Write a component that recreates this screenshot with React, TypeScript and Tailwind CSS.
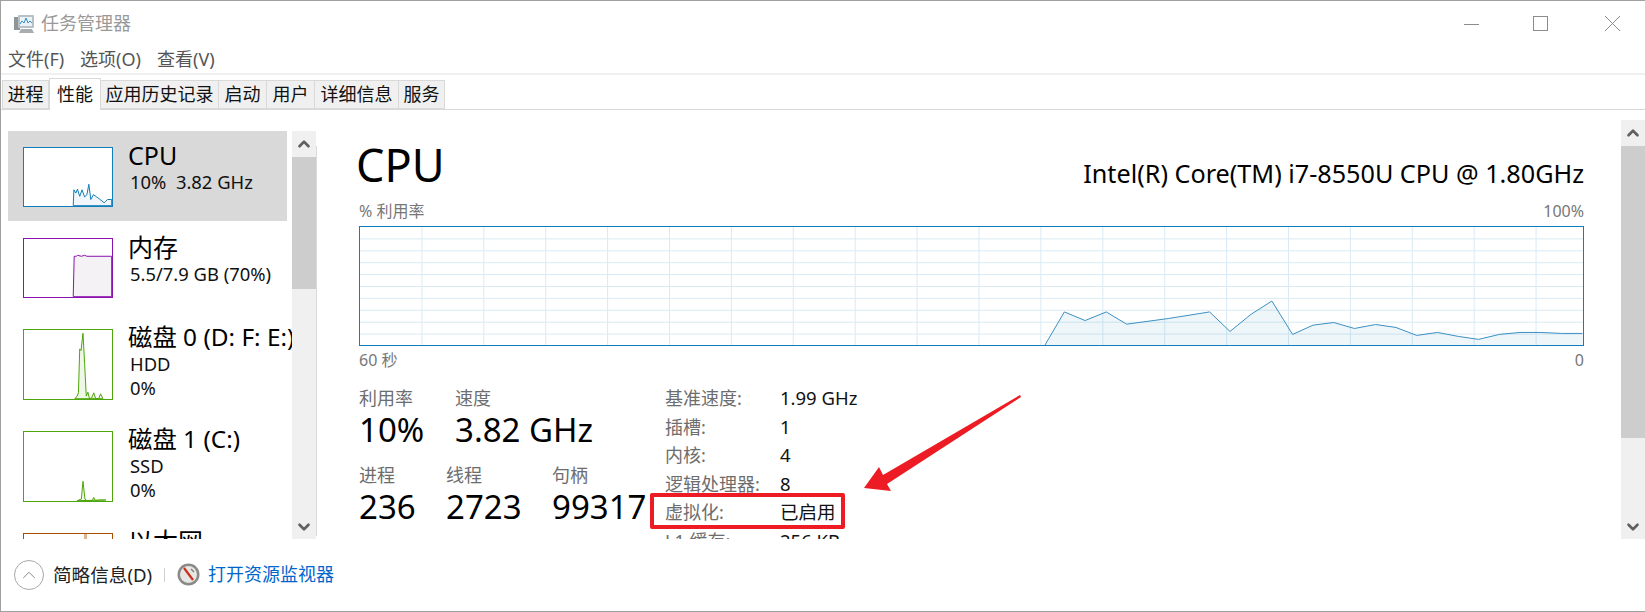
import React from 'react';
import { ChevronUp, ChevronDown } from 'lucide-react';

// points are read off zoomed crops of the chart: x is crop px / 2.55, y is crop px / 3
const cpuRaw = [
  [38, 226], [88, 125], [141, 151], [195, 125], [247, 162], [353, 145], [459, 125], [511, 184], [565, 132],
  [618, 92], [671, 193], [723, 165], [776, 157], [829, 175], [883, 163], [935, 172], [988, 196], [1041, 187],
  [1094, 199], [1146, 208], [1199, 193], [1252, 187], [1305, 187], [1358, 190], [1411, 190],
];
const cpuPoints = cpuRaw.map(([x, y]) => `${1030 + x / 2.55 - 359},${270 + y / 3 - 226}`).join(' ');

const vLines = Array.from({ length: 19 }, (_, i) => 62 * (i + 1));
const hLines = Array.from({ length: 9 }, (_, i) => 12 * (i + 1));

const Thumb = ({ h, color, fill, box, points }: { h: string; color: string; fill: string; box: string; points: string }) => (
  <div className={`w-[90px] shrink-0 border-[1.5px] bg-white ${h}`} style={{ borderColor: color }}>
    <svg viewBox={box} preserveAspectRatio="none" className="w-full h-full block">
      <polygon points={points} fill={fill} stroke={color} strokeWidth="1" vectorEffect="non-scaling-stroke" />
    </svg>
  </div>
);

const Tab = ({ label, w, active }: { label: string; w: string; active?: boolean }) => (
  <div
    className={`${w} flex items-center justify-center text-[18px] text-[#111] border border-[#d9d9d9] whitespace-nowrap ${
      active ? 'h-[32px] bg-white border-b-0 relative z-10 -mb-px' : 'h-[29px] bg-[#f0f0f0] -ml-px'
    }`}
  >
    {label}
  </div>
);

const SpecRow = ({ label, value }: { label: string; value: string }) => (
  <div className="flex leading-[28.6px] text-[18px]">
    <span className="w-[115px] text-[#6d6d6d]">{label}</span>
    <span className="text-[#111] text-[18.5px]">{value}</span>
  </div>
);

const Stat = ({ label, value, w }: { label: string; value: string; w: string }) => (
  <div className={w}>
    <div className="text-[18px] leading-[24px] text-[#6d6d6d]">{label}</div>
    <div className="text-[33px] leading-[40px] text-black whitespace-nowrap">{value}</div>
  </div>
);

const Scrollbar = ({ thumb }: { thumb: string }) => (
  <div className="w-[24px] h-full flex flex-col bg-[#f0f0f0] shrink-0">
    <div className="h-[26px] flex items-center justify-center">
      <ChevronUp size={18} strokeWidth={3.5} className="text-[#606060]" />
    </div>
    <div className={`${thumb} bg-[#cdcdcd]`} />
    <div className="flex-1 flex items-end justify-center pb-[3px]">
      <ChevronDown size={18} strokeWidth={3.5} className="text-[#606060]" />
    </div>
  </div>
);

export default function App() {
  return (
    <div
      className="relative w-[1645px] h-[612px] overflow-hidden bg-white border-t border-b border-l border-[#a0a0a0]"
      style={{ fontFamily: '"Noto Sans", "Noto Sans CJK SC", sans-serif' }}
    >
      {/* title bar */}
      <div className="h-[45px] flex items-center pl-[13px] pr-[25px]">
        <svg width="21" height="20" viewBox="0 0 21 20" className="shrink-0">
          <rect x="0" y="3" width="6" height="13" fill="#8f9699" />
          <rect x="4" y="1" width="16" height="13" rx="1" fill="#b9c0c4" />
          <rect x="6" y="3" width="12" height="9" fill="#e8f2f8" />
          <path d="M6 10 L8 7 L10 9 L12 4 L14 9 L16 7 L18 9" fill="none" stroke="#3a8cc4" strokeWidth="1" />
          <path d="M7 15 H18 L20 19 H5 Z" fill="#a6acaf" />
        </svg>
        <span className="ml-[6px] text-[18px] text-[#999]">任务管理器</span>
        <div className="ml-auto flex items-center">
          <div className="w-[15px] h-px bg-[#8c8c8c] mr-[54px] mt-[1px]" />
          <div className="w-[15px] h-[15px] border border-[#8c8c8c] mr-[57px]" />
          <svg width="15" height="15" viewBox="0 0 15 15">
            <path d="M0 0 L15 15 M15 0 L0 15" stroke="#8c8c8c" strokeWidth="1" />
          </svg>
        </div>
      </div>

      {/* menu */}
      <div className="h-[27px] flex items-center pl-[7px] text-[18px] text-[#555]">
        <span className="w-[72px]">文件(F)</span>
        <span className="w-[77px]">选项(O)</span>
        <span>查看(V)</span>
      </div>
      <div className="h-[2px] bg-[#f0f0f0]" />

      {/* tabs */}
      <div className="h-[35px] flex items-end pl-[2px] border-b border-[#d9d9d9]">
        <Tab label="进程" w="w-[47px]" />
        <Tab label="性能" w="w-[52px]" active />
        <Tab label="应用历史记录" w="w-[119px]" />
        <Tab label="启动" w="w-[49px]" />
        <Tab label="用户" w="w-[49px]" />
        <Tab label="详细信息" w="w-[85px]" />
        <Tab label="服务" w="w-[47px]" />
      </div>

      {/* main */}
      <div className="h-[429px] flex overflow-hidden">
        <div className="w-[284px] ml-[7px] pt-[21px] h-full overflow-hidden shrink-0">
          <div className="w-[279px] h-[90px] mb-px bg-[#d9d9d9] flex pl-[15px]">
            <div className="pt-[16px]">
              <Thumb h="h-[60px]" color="#117dbb" fill="#f1f6fa" box="69 441 270 179"
                points="220,619 222,570 228,580 233,568 240,590 247,570 255,592 262,585 268,553 274,600 282,585 292,592 300,598 315,610 325,600 338,600 338,619" />
            </div>
            <div className="ml-[15px] pt-[9px]">
              <div className="text-[25px] leading-[30px] text-black">CPU</div>
              <div className="text-[18.4px] leading-[24px] text-[#111] pl-[2px] whitespace-pre">10%  3.82 GHz</div>
            </div>
          </div>

          <div className="w-[279px] h-[91px] flex pl-[15px]">
            <div className="pt-[16px]">
              <Thumb h="h-[60px]" color="#8b12ae" fill="#f4f2f4" box="69 55 270 178"
                points="220,232 223,108 230,108 233,105 245,108 255,105 262,108 338,108 338,232" />
            </div>
            <div className="ml-[15px] pt-[10px]">
              <div className="text-[25px] leading-[30px] text-black">内存</div>
              <div className="text-[18.4px] leading-[24px] text-[#111] pl-[2px] whitespace-nowrap">5.5/7.9 GB (70%)</div>
            </div>
          </div>

          <div className="w-[279px] h-[102px] flex pl-[15px]">
            <div className="pt-[16px]">
              <Thumb h="h-[71px]" color="#4da60c" fill="#eff7e7" box="69 327 270 212"
                points="225,538 232,530 236,520 240,385 244,390 250,337 255,430 260,530 265,518 270,538 277,535 283,520 289,538 298,538 304,523 311,538" />
            </div>
            <div className="ml-[15px] pt-[9px] whitespace-nowrap">
              <div className="text-[24.4px] leading-[30px] text-black">磁盘 0 (D: F: E:)</div>
              <div className="text-[18.4px] leading-[24px] text-[#111] pl-[2px]">HDD</div>
              <div className="text-[18.4px] leading-[24px] text-[#111] pl-[2px]">0%</div>
            </div>
          </div>

          <div className="w-[279px] h-[102px] flex pl-[15px]">
            <div className="pt-[16px]">
              <Thumb h="h-[71px]" color="#4da60c" fill="#eff7e7" box="69 633 270 213"
                points="232,845 245,840 250,785 256,840 262,845 278,845 283,835 288,845 300,843 320,843" />
            </div>
            <div className="ml-[15px] pt-[9px] whitespace-nowrap">
              <div className="text-[24.4px] leading-[30px] text-black">磁盘 1 (C:)</div>
              <div className="text-[18.4px] leading-[24px] text-[#111] pl-[2px]">SSD</div>
              <div className="text-[18.4px] leading-[24px] text-[#111] pl-[2px]">0%</div>
            </div>
          </div>

          <div className="w-[279px] h-[102px] flex pl-[15px]">
            <div className="pt-[16px]">
              <div className="w-[90px] h-[60px] border-[1.5px] border-[#a74f01] pl-[60px]">
                <div className="w-[3px] h-full bg-[#e0b48c]" />
              </div>
            </div>
            <div className="ml-[15px] pt-[9px]">
              <div className="text-[25px] leading-[30px] text-black">以太网</div>
            </div>
          </div>
        </div>

        <div className="h-full pt-[21px] flex shrink-0">
          <Scrollbar thumb="h-[132px]" />
          <div className="w-px h-[390px] mt-[15px] bg-[#d9d9d9]" />
        </div>

        {/* detail pane */}
        <div className="flex-1 min-w-0 pl-[42px] pr-[37px] pt-[31px]">
          <div className="h-[48px] flex items-center justify-between">
            <span className="text-[45px] leading-[48px] text-black -ml-[3px]">CPU</span>
            <span className="text-[25.2px] text-black mt-[17px] whitespace-nowrap">Intel(R) Core(TM) i7-8550U CPU @ 1.80GHz</span>
          </div>
          <div className="h-[37px] pt-[7px] flex justify-between items-center text-[16px] text-[#777]">
            <span>% 利用率</span>
            <span>100%</span>
          </div>
          <div className="h-[120px] border-[1.5px] border-[#117dbb] bg-white">
            <svg viewBox="0 0 1225 119" preserveAspectRatio="none" className="w-full h-full block">
              {hLines.map((y) => (
                <line key={y} x1="0" x2="1225" y1={y} y2={y} stroke="#d9eaf4" strokeWidth="1" />
              ))}
              {vLines.map((x) => (
                <line key={x} x1={x} x2={x} y1="0" y2="119" stroke="#d9eaf4" strokeWidth="1" />
              ))}
              <polygon points={`${cpuPoints} 1225,119`} fill="#117dbb" fillOpacity="0.07" />
              <polyline points={cpuPoints} fill="none" stroke="#3a8fc2" strokeWidth="1" />
            </svg>
          </div>
          <div className="h-[28px] flex justify-between items-center text-[16px] text-[#777]">
            <span>60 秒</span>
            <span>0</span>
          </div>

          <div className="flex">
            <div className="w-[306px] pt-[12px] shrink-0">
              <div className="flex">
                <Stat label="利用率" value="10%" w="w-[96px]" />
                <Stat label="速度" value="3.82 GHz" w="w-[200px]" />
              </div>
              <div className="flex mt-[13px]">
                <Stat label="进程" value="236" w="w-[87px]" />
                <Stat label="线程" value="2723" w="w-[106px]" />
                <Stat label="句柄" value="99317" w="w-[100px]" />
              </div>
            </div>
            <div className="pt-[10px]">
              <SpecRow label="基准速度:" value="1.99 GHz" />
              <SpecRow label="插槽:" value="1" />
              <SpecRow label="内核:" value="4" />
              <SpecRow label="逻辑处理器:" value="8" />
              <SpecRow label="虚拟化:" value="已启用" />
              <SpecRow label="L1 缓存:" value="256 KB" />
            </div>
          </div>
        </div>

        <div className="h-full pt-[10px] shrink-0">
          <Scrollbar thumb="h-[292px]" />
        </div>
      </div>

      {/* footer */}
      <div className="h-[71px] flex items-center pl-[13px]">
        <div className="w-[30px] h-[30px] rounded-full border border-[#a8a8a8] flex items-center justify-center">
          <ChevronUp size={22} strokeWidth={1} className="text-[#808080]" />
        </div>
        <span className="ml-[9px] text-[18.6px] text-[#222] whitespace-nowrap">简略信息(D)</span>
        <div className="ml-[12px] w-px h-[14px] bg-[#d0d0d0]" />
        <svg width="23" height="23" viewBox="0 0 23 23" className="ml-[12px]">
          <circle cx="11.5" cy="11.5" r="11" fill="#8a8a8a" />
          <circle cx="11.5" cy="11.5" r="8.5" fill="#e8e6e2" />
          <path d="M7 5 L16 17" stroke="#c8321e" strokeWidth="2.2" />
          <path d="M14 6 L17 9" stroke="#777" strokeWidth="1.2" />
        </svg>
        <span className="ml-[8px] text-[18px] text-[#0066cc] whitespace-nowrap">打开资源监视器</span>
      </div>

      {/* annotation drawn on top of the screenshot */}
      <div className="absolute left-[649px] top-[492px] w-[195px] h-[36px] border-[4px] border-[#ed1c24] rounded-[2px]" />
      <svg className="absolute left-[855px] top-[385px]" width="170" height="110" viewBox="855 385 170 110">
        <polygon points="1019,394 1020,396 886,483 890,490 863,487 878,466 882,474" fill="#ed1c24" />
      </svg>
    </div>
  );
}
